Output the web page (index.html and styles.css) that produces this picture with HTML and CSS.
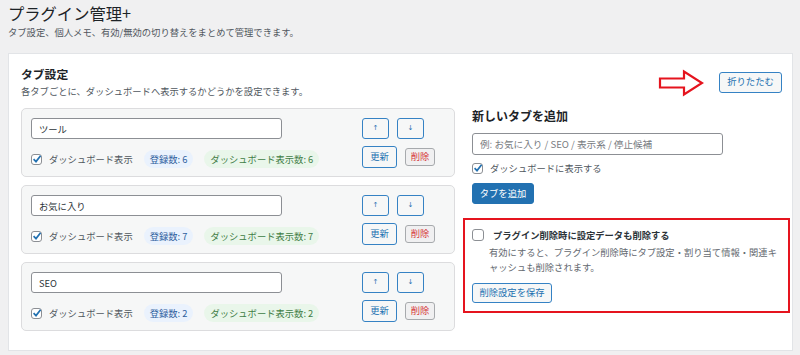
FILE: index.html
```html
<!DOCTYPE html>
<html lang="ja">
<head>
<meta charset="utf-8">
<title>プラグイン管理+</title>
<link rel="stylesheet" href="styles.css">
</head>
<body>
<div class="page">
  <h1 class="title">プラグイン管理+</h1>
  <p class="lead">タブ設定、個人メモ、有効/無効の切り替えをまとめて管理できます。</p>

  <section class="card">
    <div class="card-head">
      <div class="head-text">
        <h2 class="h2">タブ設定</h2>
        <p class="desc">各タブごとに、ダッシュボードへ表示するかどうかを設定できます。</p>
      </div>
      <div class="head-actions">
        <svg class="arrow" width="46" height="28" viewBox="0 0 46 28"><polygon points="2,9.5 26,9.5 26,2.5 44,14 26,25.5 26,18.5 2,18.5" fill="none" stroke="#e5141e" stroke-width="2.2" stroke-linejoin="miter"/></svg>
        <button class="btn btn-collapse">折りたたむ</button>
      </div>
    </div>

    <div class="card-body">
      <div class="tabs">
        <div class="tab-row">
          <div class="tab-main">
            <input class="field" type="text" value="ツール">
            <div class="meta">
              <span class="cb"><svg width="12" height="12" viewBox="0 0 12 12"><path d="M2.6 6.2 L5 8.6 L9.6 2.8" fill="none" stroke="#2271b1" stroke-width="1.7"/></svg></span>
              <span class="cb-label">ダッシュボード表示</span>
              <span class="badge badge-blue">登録数: 6</span>
              <span class="badge badge-green">ダッシュボード表示数: 6</span>
            </div>
          </div>
          <div class="tab-actions">
            <div class="act-row"><button class="btn btn-sq">↑</button><button class="btn btn-sq">↓</button></div>
            <div class="act-row"><button class="btn btn-upd">更新</button><button class="btn btn-del">削除</button></div>
          </div>
        </div>

        <div class="tab-row">
          <div class="tab-main">
            <input class="field" type="text" value="お気に入り">
            <div class="meta">
              <span class="cb"><svg width="12" height="12" viewBox="0 0 12 12"><path d="M2.6 6.2 L5 8.6 L9.6 2.8" fill="none" stroke="#2271b1" stroke-width="1.7"/></svg></span>
              <span class="cb-label">ダッシュボード表示</span>
              <span class="badge badge-blue">登録数: 7</span>
              <span class="badge badge-green">ダッシュボード表示数: 7</span>
            </div>
          </div>
          <div class="tab-actions">
            <div class="act-row"><button class="btn btn-sq">↑</button><button class="btn btn-sq">↓</button></div>
            <div class="act-row"><button class="btn btn-upd">更新</button><button class="btn btn-del">削除</button></div>
          </div>
        </div>

        <div class="tab-row">
          <div class="tab-main">
            <input class="field" type="text" value="SEO">
            <div class="meta">
              <span class="cb"><svg width="12" height="12" viewBox="0 0 12 12"><path d="M2.6 6.2 L5 8.6 L9.6 2.8" fill="none" stroke="#2271b1" stroke-width="1.7"/></svg></span>
              <span class="cb-label">ダッシュボード表示</span>
              <span class="badge badge-blue">登録数: 2</span>
              <span class="badge badge-green">ダッシュボード表示数: 2</span>
            </div>
          </div>
          <div class="tab-actions">
            <div class="act-row"><button class="btn btn-sq">↑</button><button class="btn btn-sq">↓</button></div>
            <div class="act-row"><button class="btn btn-upd">更新</button><button class="btn btn-del">削除</button></div>
          </div>
        </div>
      </div>

      <div class="side">
        <div class="add">
          <h3 class="h3">新しいタブを追加</h3>
          <input class="field field-add" type="text" placeholder="例: お気に入り / SEO / 表示系 / 停止候補">
          <div class="add-check">
            <span class="cb"><svg width="12" height="12" viewBox="0 0 12 12"><path d="M2.6 6.2 L5 8.6 L9.6 2.8" fill="none" stroke="#2271b1" stroke-width="1.7"/></svg></span>
            <span class="cb-label">ダッシュボードに表示する</span>
          </div>
          <button class="btn btn-primary">タブを追加</button>
        </div>

        <div class="danger-box">
          <div class="danger-check">
            <span class="cb cb-empty"></span>
            <span class="danger-label">プラグイン削除時に設定データも削除する</span>
          </div>
          <p class="danger-desc">有効にすると、プラグイン削除時にタブ設定・割り当て情報・関連キャッシュも削除されます。</p>
          <button class="btn btn-save">削除設定を保存</button>
        </div>
      </div>
    </div>
  </section>
</div>
</body>
</html>
```

FILE: styles.css
```css
* { box-sizing: border-box; }

html, body {
  margin: 0;
  padding: 0;
  background: #f0f0f1;
}

body {
  font-family: "Noto Sans CJK JP", "Noto Sans", sans-serif;
  color: #3c434a;
  font-size: 9.3px;
}

.page {
  padding: 3px 7px 0 8px;
}

.title {
  margin: 0;
  font-size: 16.3px;
  line-height: 20px;
  font-weight: 400;
  color: #1d2327;
}

.lead {
  margin: 2px 0 0;
  font-size: 9.3px;
  line-height: 14px;
  color: #50575e;
}

.card {
  margin-top: 14px;
  background: #fff;
  border: 1px solid #e2e4e7;
  padding: 11px 7px 19px 12px;
}

.card-head {
  display: flex;
  justify-content: space-between;
  align-items: flex-start;
}

.h2 {
  margin: 0;
  font-size: 11.8px;
  line-height: 17px;
  font-weight: 700;
  color: #1d2327;
}

.desc {
  margin: 2px 0 0;
  font-size: 9.3px;
  line-height: 14px;
  color: #50575e;
}

.head-actions {
  display: flex;
  align-items: center;
  gap: 15px;
  margin-top: 2px;
  margin-right: 3px;
}

.arrow {
  display: block;
  margin-top: 2px;
}

.btn {
  font-family: "Noto Sans CJK JP", "Noto Sans", sans-serif;
  font-size: 9.3px;
  line-height: 1;
  padding: 0;
  border: 1px solid #3582c4;
  border-radius: 3px;
  background: #f6f7f7;
  color: #2271b1;
  cursor: pointer;
}

.btn-collapse {
  width: 63px;
  height: 21px;
}

.card-body {
  margin-top: 10px;
  display: grid;
  grid-template-columns: 434px 1fr;
  column-gap: 8px;
}

.tabs {
  display: flex;
  flex-direction: column;
  gap: 8px;
}

.tab-row {
  display: flex;
  border: 1px solid #dcdcde;
  border-radius: 5px;
  background: #f6f7f7;
  padding: 9px 10px 8px 9px;
}

.tab-main {
  flex: 0 0 331px;
}

.field {
  display: block;
  width: 251px;
  height: 21px;
  border: 1px solid #8c8f94;
  border-radius: 3px;
  background: #fff;
  padding: 0 7px;
  font-family: "Noto Sans CJK JP", "Noto Sans", sans-serif;
  font-size: 9.3px;
  color: #2c3338;
  outline: none;
}

.field::placeholder {
  color: #787c82;
  font-size: 9.6px;
}

.meta {
  margin-top: 11px;
  display: flex;
  align-items: center;
  height: 18px;
}

.cb {
  flex: 0 0 auto;
  width: 11px;
  height: 11px;
  border: 1px solid #8c8f94;
  border-radius: 3px;
  background: #fff;
  display: flex;
  align-items: center;
  justify-content: center;
  overflow: visible;
}

.cb svg {
  display: block;
  flex: 0 0 auto;
}

.cb-label {
  margin-left: 7px;
  color: #50575e;
  line-height: 14px;
}

.badge {
  display: inline-block;
  height: 18px;
  line-height: 18px;
  padding: 0 6px;
  border-radius: 9px;
  margin-left: 11px;
}

.badge-blue {
  background: #eaf2fd;
  color: #2f5f9e;
  margin-left: 11px;
}

.badge-green {
  background: #e9f6ea;
  color: #3f7d45;
}

.tab-actions {
  display: flex;
  flex-direction: column;
  gap: 7px;
}

.act-row {
  display: flex;
  align-items: center;
  gap: 8px;
}

.btn-sq {
  width: 27px;
  height: 21px;
  font-family: "DejaVu Sans", sans-serif;
  font-size: 7px;
}

.btn-upd {
  width: 35px;
  height: 22px;
}

.btn-del {
  width: 30px;
  height: 18px;
  border-color: #a7aaad;
  background: #f0f0f1;
  color: #d63638;
}

.side {
  display: flex;
  flex-direction: column;
}

.add {
  padding-left: 9px;
}

.h3 {
  margin: 0;
  font-size: 12px;
  line-height: 16px;
  font-weight: 700;
  color: #1d2327;
}

.field-add {
  margin-top: 9px;
  height: 22px;
}

.add-check {
  margin-top: 6px;
  display: flex;
  align-items: center;
  height: 14px;
}

.btn-primary {
  margin-top: 8px;
  width: 62px;
  height: 21px;
  background: #2271b1;
  border-color: #2271b1;
  color: #fff;
}

.danger-box {
  margin-top: 14px;
  border: 2px solid #e5141e;
  padding: 8px 7px 8px 7px;
}

.danger-check {
  display: flex;
  align-items: center;
  height: 14px;
}

.cb-empty {
  width: 12px;
  height: 12px;
}

.danger-label {
  margin-left: 9px;
  font-weight: 700;
  color: #2c3338;
  line-height: 14px;
}

.danger-desc {
  margin: 3px 0 0 17px;
  width: 292px;
  line-height: 15px;
  color: #646970;
}

.btn-save {
  margin-top: 8px;
  width: 80px;
  height: 20px;
  display: block;
}
```
